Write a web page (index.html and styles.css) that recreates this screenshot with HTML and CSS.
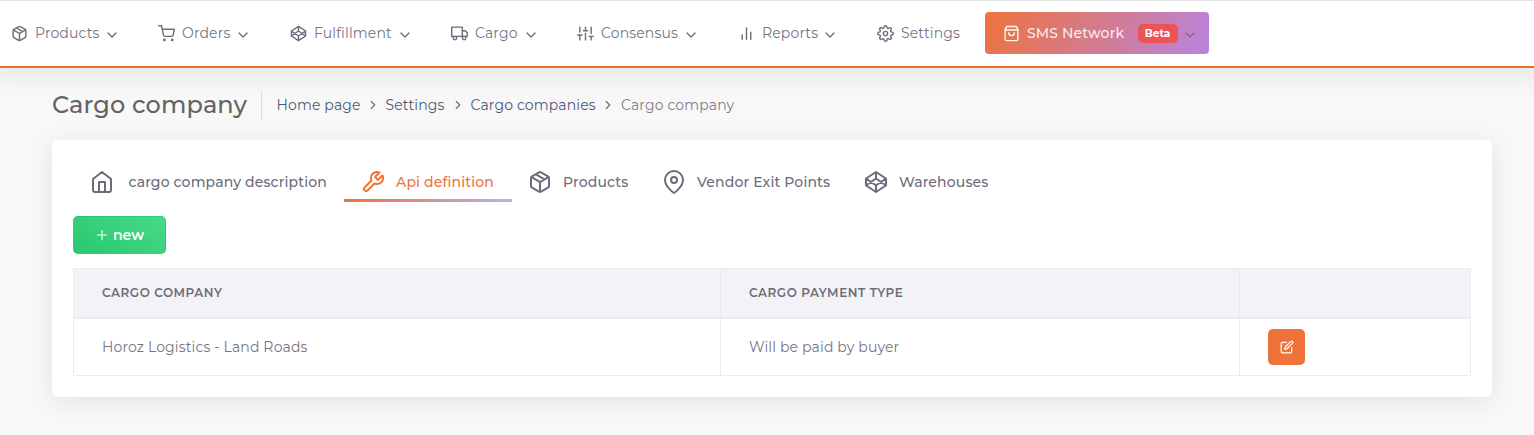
FILE: index.html
```
<!DOCTYPE html>
<html lang="en">
<head>
<meta charset="utf-8">
<title>Cargo company</title>
<link rel="stylesheet" href="styles.css">
</head>
<body>
<svg class="sprite" aria-hidden="true">
  <symbol id="package" viewBox="0 0 24 24"><path d="M16.5 9.4 7.55 4.24M21 16V8a2 2 0 0 0-1-1.73l-7-4a2 2 0 0 0-2 0l-7 4A2 2 0 0 0 3 8v8a2 2 0 0 0 1 1.73l7 4a2 2 0 0 0 2 0l7-4A2 2 0 0 0 21 16zM3.27 6.96 12 12.01l8.73-5.05M12 22.08V12"/></symbol>
  <symbol id="cart" viewBox="0 0 24 24"><circle cx="9" cy="21" r="1"/><circle cx="20" cy="21" r="1"/><path d="M1 1h4l2.68 13.39a2 2 0 0 0 2 1.61h9.72a2 2 0 0 0 2-1.61L23 6H6"/></symbol>
  <symbol id="codepen" viewBox="0 0 24 24"><path d="M12 2l10 6.5v7L12 22 2 15.5v-7L12 2zM12 22v-6.5M22 8.5l-10 7-10-7M2 15.5l10-7 10 7M12 2v6.5"/></symbol>
  <symbol id="truck" viewBox="0 0 24 24"><path d="M1 3h15v13H1zM16 8h4l3 3v5h-7V8z"/><circle cx="5.5" cy="18.5" r="2.5"/><circle cx="18.5" cy="18.5" r="2.5"/></symbol>
  <symbol id="sliders" viewBox="0 0 24 24"><path d="M4 21v-7M4 10V3M12 21v-9M12 8V3M20 21v-5M20 12V3M1 14h6M9 8h6M17 16h6"/></symbol>
  <symbol id="bars" viewBox="0 0 24 24"><path d="M18 20V10M12 20V4M6 20v-6"/></symbol>
  <symbol id="settings" viewBox="0 0 24 24"><circle cx="12" cy="12" r="3"/><path d="M19.4 15a1.65 1.65 0 0 0 .33 1.82l.06.06a2 2 0 1 1-2.83 2.83l-.06-.06a1.65 1.65 0 0 0-2.8 1.17V21a2 2 0 0 1-4 0v-.09A1.65 1.65 0 0 0 9 19.4a1.65 1.65 0 0 0-1.82.33l-.06.06a2 2 0 1 1-2.83-2.83l.06-.06A1.65 1.65 0 0 0 3.18 14H3a2 2 0 0 1 0-4h.09A1.65 1.65 0 0 0 4.6 9a1.65 1.65 0 0 0-.33-1.82l-.06-.06a2 2 0 1 1 2.83-2.83l.06.06A1.65 1.65 0 0 0 9 4.6 1.65 1.65 0 0 0 10 3.09V3a2 2 0 0 1 4 0v.09a1.65 1.65 0 0 0 2.82 1.26l.06-.06a2 2 0 1 1 2.83 2.83l-.06.06A1.65 1.65 0 0 0 19.4 9 1.65 1.65 0 0 0 20.91 10H21a2 2 0 0 1 0 4h-.09a1.65 1.65 0 0 0-1.51 1z"/></symbol>
  <symbol id="bag" viewBox="0 0 24 24"><path d="M5.5 2h13L21 6v14a2 2 0 0 1-2 2H5a2 2 0 0 1-2-2V6zM3 7h18M16 11a4 4 0 0 1-8 0"/></symbol>
  <symbol id="chevron" viewBox="0 0 24 24"><path d="M6 9l6 6 6-6"/></symbol>
  <symbol id="chevron-right" viewBox="0 0 24 24"><path d="M9 18l6-6-6-6"/></symbol>
  <symbol id="home" viewBox="0 0 24 24"><path d="M3 9l9-7 9 7v11a2 2 0 0 1-2 2H5a2 2 0 0 1-2-2zM9 22V12h6v10"/></symbol>
  <symbol id="tool" viewBox="0 0 24 24"><path d="M14.7 6.3a1 1 0 0 0 0 1.4l1.6 1.6a1 1 0 0 0 1.4 0l3.77-3.77a6 6 0 0 1-7.94 7.94l-6.91 6.91a2.12 2.12 0 0 1-3-3l6.91-6.91a6 6 0 0 1 7.94-7.94l-3.76 3.76z"/></symbol>
  <symbol id="pin" viewBox="0 0 24 24"><path d="M21 10c0 7-9 13-9 13s-9-6-9-13a9 9 0 0 1 18 0z"/><circle cx="12" cy="10" r="3"/></symbol>
  <symbol id="plus" viewBox="0 0 24 24"><path d="M12 5v14M5 12h14"/></symbol>
  <symbol id="edit" viewBox="0 0 24 24"><path d="M11 4H4a2 2 0 0 0-2 2v14a2 2 0 0 0 2 2h14a2 2 0 0 0 2-2v-7M18.5 2.5a2.121 2.121 0 0 1 3 3L12 15l-4 1 1-4 9.5-9.5z"/></symbol>
</svg>

<nav class="navbar">
  <a class="nav-item"><svg class="icon nav-icon"><use href="#package"/></svg><span class="nav-label products">Products</span><svg class="icon caret"><use href="#chevron"/></svg></a>
  <a class="nav-item"><svg class="icon nav-icon"><use href="#cart"/></svg><span class="nav-label orders">Orders</span><svg class="icon caret"><use href="#chevron"/></svg></a>
  <a class="nav-item"><svg class="icon nav-icon"><use href="#codepen"/></svg><span class="nav-label fulfillment">Fulfillment</span><svg class="icon caret"><use href="#chevron"/></svg></a>
  <a class="nav-item"><svg class="icon nav-icon"><use href="#truck"/></svg><span class="nav-label cargo">Cargo</span><svg class="icon caret"><use href="#chevron"/></svg></a>
  <a class="nav-item"><svg class="icon nav-icon"><use href="#sliders"/></svg><span class="nav-label consensus">Consensus</span><svg class="icon caret"><use href="#chevron"/></svg></a>
  <a class="nav-item"><svg class="icon nav-icon"><use href="#bars"/></svg><span class="nav-label reports">Reports</span><svg class="icon caret"><use href="#chevron"/></svg></a>
  <a class="nav-item"><svg class="icon nav-icon"><use href="#settings"/></svg><span class="nav-label settings">Settings</span></a>
  <a class="nav-item sms"><svg class="icon nav-icon"><use href="#bag"/></svg><span class="nav-label network">SMS Network</span><span class="badge">Beta</span><svg class="icon caret"><use href="#chevron"/></svg></a>
</nav>

<main class="content">
  <header class="page-header">
    <h1 class="title">Cargo company</h1>
    <div class="breadcrumb">
      <a class="crumb crumb-home">Home page</a><svg class="icon separator"><use href="#chevron-right"/></svg>
      <a class="crumb crumb-settings">Settings</a><svg class="icon separator"><use href="#chevron-right"/></svg>
      <a class="crumb crumb-companies">Cargo companies</a><svg class="icon separator"><use href="#chevron-right"/></svg>
      <span class="crumb current">Cargo company</span>
    </div>
  </header>

  <section class="card">
    <div class="tabs">
      <a class="tab tab-description"><svg class="icon tab-icon"><use href="#home"/></svg><span class="tab-label">cargo company description</span></a>
      <a class="tab tab-api active"><svg class="icon tab-icon"><use href="#tool"/></svg><span class="tab-label">Api definition</span></a>
      <a class="tab tab-products"><svg class="icon tab-icon"><use href="#package"/></svg><span class="tab-label">Products</span></a>
      <a class="tab tab-vendor"><svg class="icon tab-icon"><use href="#pin"/></svg><span class="tab-label">Vendor Exit Points</span></a>
      <a class="tab tab-warehouses"><svg class="icon tab-icon"><use href="#codepen"/></svg><span class="tab-label">Warehouses</span></a>
    </div>
    <button class="new-button"><svg class="icon plus"><use href="#plus"/></svg><span>new</span></button>
    <table class="table">
      <colgroup><col class="col-company"><col class="col-payment"><col class="col-actions"></colgroup>
      <thead><tr><th>Cargo company</th><th>Cargo payment type</th><th></th></tr></thead>
      <tbody><tr><td>Horoz Logistics - Land Roads</td><td>Will be paid by buyer</td><td><button class="edit-button"><svg class="icon edit"><use href="#edit"/></svg></button></td></tr></tbody>
    </table>
  </section>
</main>
</body>
</html>
```
FILE: styles.css
```
* { box-sizing: border-box; }
body {
  margin: 0;
  height: 435px;
  overflow: hidden;
  background: #f8f8f8;
  color: #777484;
  font: 400 14px/20px Montserrat, Inter, sans-serif;
  letter-spacing: 0.14px;
}
.sprite { display: none; }
.icon {
  flex: none;
  fill: none;
  stroke: currentColor;
  stroke-width: 2;
  stroke-linecap: round;
  stroke-linejoin: round;
}
.navbar {
  display: grid;
  grid-template-columns: 147px 132px 161px 126px 161px 139px 107.5px 224px;
  align-items: center;
  height: 68px;
  padding: 0 0 1px 11px;
  border-top: 1px solid #e4e4e4;
  border-bottom: 2px solid #e96d2f;
  background: #fff;
  box-shadow: 0 0 24px 8px rgba(20, 30, 30, 0.085);
  position: relative;
}
.nav-item { display: flex; align-items: center; white-space: nowrap; }
.nav-icon { width: 17px; height: 17px; margin-right: 7px; color: #6e6b7b; }
.nav-label { flex: none; }
.caret { width: 16px; height: 16px; margin: 3px 0 0 5px; color: #6e6b7b; }
.products { width: 64px; }
.orders { width: 48px; }
.fulfillment { width: 78px; }
.cargo { width: 43px; }
.consensus { width: 77px; }
.reports { width: 55px; }
.network { width: 98px; font-weight: 500; color: rgba(255, 255, 255, 0.88); }
.sms {
  height: 42px;
  padding-left: 18.5px;
  border-radius: 4px;
  background: linear-gradient(118deg, #ee733b, #b983e1);
  color: #fff;
}
.sms .nav-icon { color: rgba(255, 255, 255, 0.92); }
.sms .caret { color: #7d6b8c; margin-left: 4px; }
.badge {
  width: 40px;
  height: 19px;
  margin-left: 12.5px;
  border-radius: 5px;
  background: #ea5455;
  font-size: 10.5px;
  font-weight: 700;
  line-height: 19px;
  letter-spacing: 0;
  text-align: center;
}
.content { padding: 23px 42px 0 52px; }
.page-header { display: flex; align-items: center; height: 28px; }
.title {
  width: 210px;
  margin: 0;
  border-right: 1px solid #d6dce1;
  color: #636363;
  font-size: 24px;
  font-weight: 500;
  line-height: 28px;
  white-space: nowrap;
}
.breadcrumb { display: flex; align-items: center; margin-left: 14.5px; white-space: nowrap; }
.crumb { color: #4d5876; }
.crumb-home { width: 83px; }
.crumb-settings { width: 59px; }
.crumb-companies { width: 124.5px; }
.crumb.current { color: #807d8b; }
.separator { width: 14px; height: 14px; margin: 0 6px; color: #6e6b7b; }
.card {
  height: 257px;
  margin-top: 21px;
  padding: 21px;
  border-radius: 6px;
  background: #fff;
  box-shadow: 0 4px 24px rgba(34, 41, 47, 0.1);
}
.tabs { display: flex; height: 41px; margin-left: -1px; }
.tab {
  display: flex;
  align-items: center;
  padding: 3px 0 0 17px;
  border-bottom: 3px solid transparent;
  color: #6e6b7b;
  font-weight: 500;
  white-space: nowrap;
}
.tab-icon { width: 24px; height: 24px; margin-right: 11px; }
.tab-description { width: 272px; padding-left: 18px; }
.tab-description .tab-icon { margin-right: 14.5px; }
.tab-api { width: 168px; }
.tab-products { width: 134px; padding-left: 16px; }
.tab-vendor { width: 202px; padding-left: 16px; }
.tab-warehouses { padding-left: 16px; }
.active {
  color: #f07339;
  border-image: linear-gradient(90deg, #ee733b, #b9b0ee) 1;
}
.new-button {
  display: flex;
  align-items: center;
  justify-content: center;
  gap: 3px;
  width: 93px;
  height: 38px;
  margin: 14px 0;
  padding: 0 1px 0 0;
  border: 1px solid rgba(40, 190, 100, 0.3);
  border-radius: 5px;
  background: linear-gradient(30deg, #28c76f, #48da89);
  color: #fff;
  font: 600 14px/20px Montserrat, Inter, sans-serif;
}
.plus { width: 16px; height: 16px; stroke-width: 1.6; }
.table { width: 1398px; table-layout: fixed; border-collapse: collapse; }
.col-company { width: 647px; }
.col-payment { width: 519px; }
.table th, .table td { padding: 0 28px; border: 1px solid #ebe9f1; text-align: left; white-space: nowrap; }
.table th {
  height: 49px;
  border-bottom-width: 2px;
  background: #f3f2f7;
  color: #6e6b7b;
  font-size: 12px;
  font-weight: 600;
  text-transform: uppercase;
  letter-spacing: 0.55px;
}
.table td { height: 58px; }
.edit-button {
  display: grid;
  place-items: center;
  width: 37px;
  height: 36px;
  padding: 0;
  border: 0;
  border-radius: 5px;
  background: #ee733b;
  color: #fff;
}
.edit { width: 14px; height: 14px; }
```
